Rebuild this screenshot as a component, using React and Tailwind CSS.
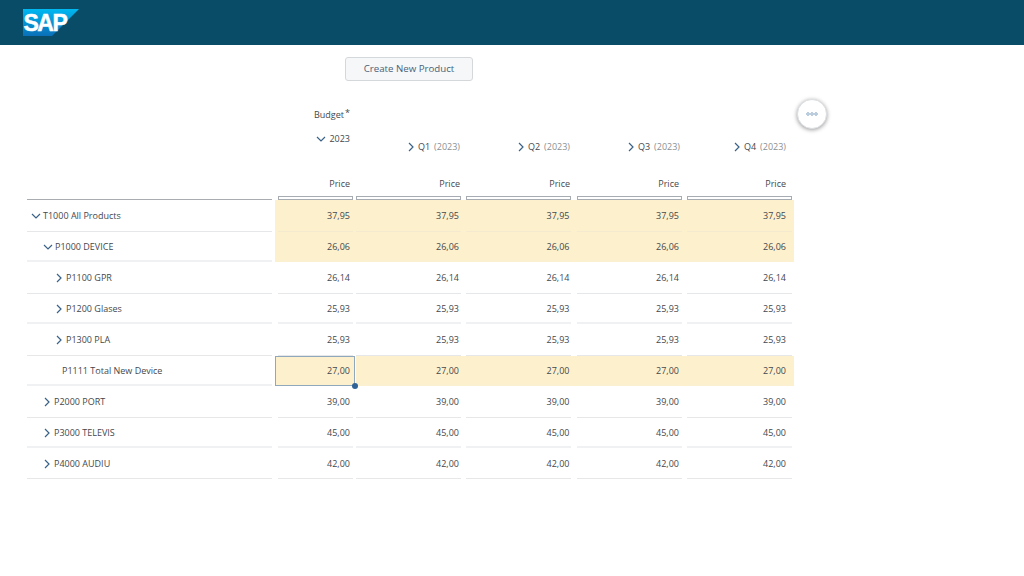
import React from "react";

const cols = [
  "w-[80px]",
  "w-[109px]",
  "w-[110px]",
  "w-[111px]",
  "w-[109px]",
];
const insets = [
  "ml-[3px] mr-[2px]",
  "ml-[1px] mr-[3px]",
  "ml-[2px] mr-[3px]",
  "ml-[3px] mr-[3px]",
  "ml-[2px] mr-[2px]",
];
const valuePad = ["pr-[3px]", "pr-[2px]", "pr-[1.5px]", "pr-[3px]", "pr-[6px]"];
const headPad = ["pr-[5px]", "pr-[4px]", "pr-[4px]", "pr-[6px]", "pr-[8px]"];
const quarterPad = ["pr-[5px]", "pr-[4px]", "pr-[4px]", "pr-[5px]", "pr-[8px]"];

const rows = [
  { label: "T1000 All Products", v: "37,95", pad: "pl-[3px]", icon: "down", fill: true, h: "h-[32px]" },
  { label: "P1000 DEVICE", v: "26,06", pad: "pl-[15px]", icon: "down", fill: true, h: "h-[30px]", thick: true },
  { label: "P1100 GPR", v: "26,14", pad: "pl-[26px]", icon: "right", h: "h-[32px]" },
  { label: "P1200 Glases", v: "25,93", pad: "pl-[26px]", icon: "right", h: "h-[30px]", thick: true },
  { label: "P1300 PLA", v: "25,93", pad: "pl-[26px]", icon: "right", h: "h-[32px]" },
  { label: "P1111 Total New Device", v: "27,00", pad: "pl-[35px]", fill: true, selected: true, h: "h-[30px]", thick: true },
  { label: "P2000 PORT", v: "39,00", pad: "pl-[14px]", icon: "right", h: "h-[32px]" },
  { label: "P3000 TELEVIS", v: "45,00", pad: "pl-[14px]", icon: "right", h: "h-[30px]", thick: true },
  { label: "P4000 AUDIU", v: "42,00", pad: "pl-[14px]", icon: "right", h: "h-[31px]" },
];

function Chevron({ dir, className = "" }) {
  return (
    <svg viewBox="0 0 12 12" className={`w-[12px] h-[12px] shrink-0 ${className}`} fill="none" stroke="#3a6288" strokeWidth="1.2">
      {dir === "down" ? <path d="M2 4 L6 8 L10 4" /> : <path d="M4 2 L8 6 L4 10" />}
    </svg>
  );
}

function Logo() {
  return (
    <svg viewBox="0 0 56 27" className="w-[56px] h-[27px]">
      <defs>
        <linearGradient id="sapg" x1="0" y1="0" x2="0" y2="1">
          <stop offset="0" stopColor="#00b8f1" />
          <stop offset="1" stopColor="#0a6fb8" />
        </linearGradient>
      </defs>
      <polygon points="0,0 56,0 29,27 0,27" fill="url(#sapg)" />
      <text x="0.5" y="21.5" fontFamily="'Liberation Sans', sans-serif" fontWeight="700" fontSize="23" letterSpacing="-1.5" stroke="#fff" strokeWidth="0.5" fill="#fff">SAP</text>
    </svg>
  );
}

export default function App() {
  return (
    <div className="relative w-[1024px] h-[576px] overflow-hidden bg-white text-[9px] text-[#44484c] font-['Open_Sans',sans-serif]">
      <header className="h-[45px] bg-[#084c68] pl-[23px] pt-[9px]">
        <Logo />
      </header>

      <div className="pl-[345px] pt-[12px]">
        <button className="w-[128px] h-[24px] pt-[1px] rounded-[3px] border border-[#d5d8db] bg-[#f6f7f8] text-[#4a6177] text-[9.7px]">
          Create New Product
        </button>
      </div>

      <div className="pl-[27px] pt-[23px]">
        <div className="flex h-[22px] items-center">
          <div className="w-[248px]" />
          <div className="w-[80px] pr-[5px] text-right">
            Budget<span className="relative -top-[2px] ml-[1px]">*</span>
          </div>
        </div>

        <div className="flex h-[40px]">
          <div className="w-[248px]" />
          <div className="w-[80px] pr-[5px] pt-[4px] flex justify-end items-center gap-[2px] h-[22px]">
            <Chevron dir="down" />
            <span>2023</span>
          </div>
          {["Q1", "Q2", "Q3", "Q4"].map((q, i) => (
            <div key={q} className={`${cols[i + 1]} ${quarterPad[i + 1]} pt-[7px] flex justify-end items-center gap-[4px] h-[34px]`}>
              <Chevron dir="right" className="-mr-[3px]" />
              <span>{q}</span>
              <span className="text-[#8b8f93]">(2023)</span>
            </div>
          ))}
        </div>

        <div className="flex h-[14px] mt-[11px] items-center">
          <div className="w-[248px]" />
          {cols.map((c, i) => (
            <div key={i} className={`${c} ${headPad[i]} text-right`}>Price</div>
          ))}
        </div>

        <div className="flex h-[9px] pt-[5px]">
          <div className="w-[245px] mr-[3px] border-b border-[#a9adb1]" />
          {cols.map((c, i) => (
            <div key={i} className={c}>
              <div className={`${insets[i]} h-[4px] border border-[#a6acb2]`} />
            </div>
          ))}
        </div>

        {rows.map((r) => (
          <div key={r.label} className={`flex ${r.h}`}>
            <div className={`w-[245px] mr-[3px] flex items-center gap-[1px] pt-[1px] ${r.pad} border-b ${r.thick ? "border-[#f0f1f2] border-b-2" : "border-[#e6e7e8]"}`}>
              {r.icon && <Chevron dir={r.icon} />}
              <span>{r.label}</span>
            </div>
            {cols.map((c, i) => {
              const sel = r.selected && i === 0;
              const shifted = r.selected && i === 1;
              return (
                <div key={i} className={`${c} relative ${r.fill ? "bg-[#fdf0cd]" : ""} ${shifted ? "ml-[1px] -mr-[1px]" : ""}`}>
                  {sel ? (
                    <>
                      <div className="h-full border border-[#8fa8bc] pr-[4px] flex items-center justify-end">{r.v}</div>
                      <div className="absolute right-[-3px] bottom-[-3px] w-[6px] h-[6px] rounded-full bg-[#2f6397] z-10" />
                    </>
                  ) : (
                    <div className={`${insets[i]} h-full flex items-center justify-end pt-[1px] ${shifted ? "pr-[3px]" : valuePad[i]} ${r.thick ? "border-b-2" : "border-b"} ${r.fill ? (r.thick ? "border-[#fbf0cf]" : "border-[#f4ead0]") : r.thick ? "border-[#f0f1f2]" : "border-[#e6e7e8]"}`}>
                      {r.v}
                    </div>
                  )}
                </div>
              );
            })}
          </div>
        ))}
      </div>

      <button className="absolute left-[797px] top-[99px] w-[30px] h-[30px] rounded-full bg-white border border-[#dcdfe2] shadow-[0_1px_4px_rgba(0,0,0,0.4)] flex items-center justify-center">
        <svg viewBox="0 0 12 4" className="w-[12px] h-[4px]" fill="none" stroke="#4a78a8" strokeWidth="0.6">
          <circle cx="2" cy="2" r="1.3" />
          <circle cx="6" cy="2" r="1.3" />
          <circle cx="10" cy="2" r="1.3" />
        </svg>
      </button>
    </div>
  );
}
